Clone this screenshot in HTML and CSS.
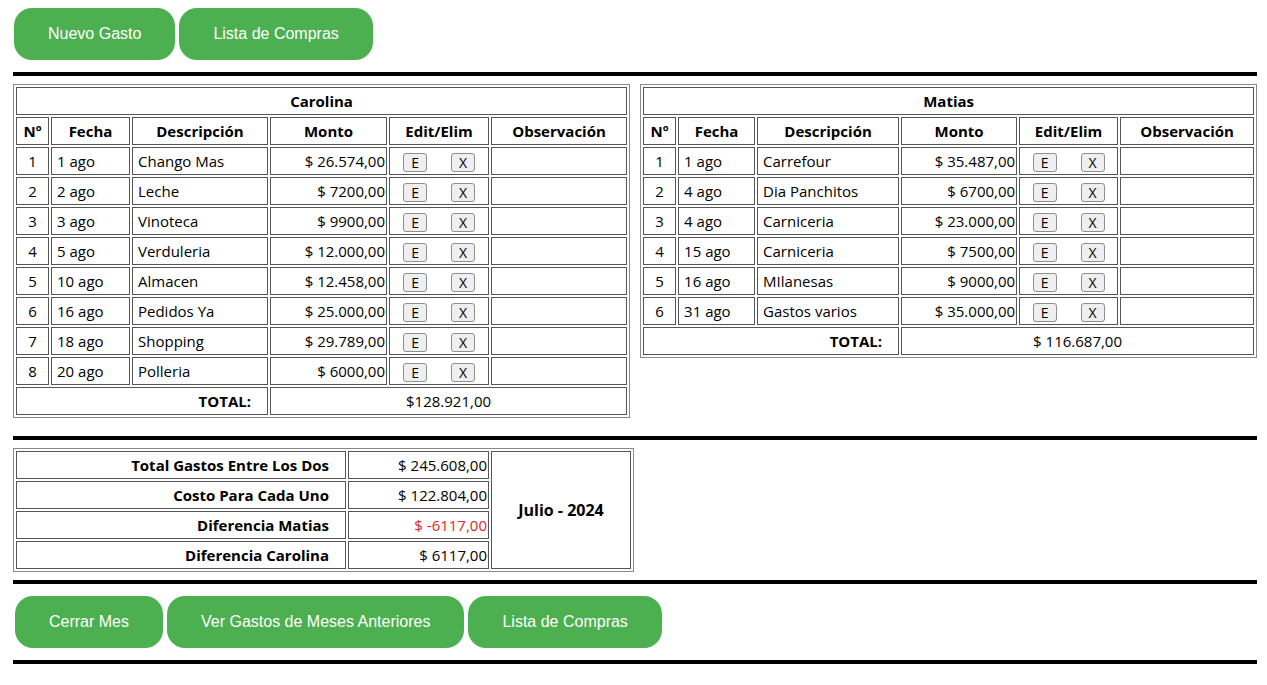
FILE: index.html
```html
<!DOCTYPE html>
<html lang="es">
<head>
<meta charset="utf-8">
<title>Gastos</title>
<link rel="stylesheet" href="styles.css">
</head>
<body>
<div class="page">
  <div class="btn-row top-row">
    <button class="btn">Nuevo Gasto</button>
    <button class="btn">Lista de Compras</button>
  </div>
  <div class="rule rule-1"></div>

  <div class="tables">
    <table class="grid carolina">
      <colgroup>
        <col class="w-n"><col class="cw-fecha"><col class="cw-desc"><col class="cw-monto"><col class="cw-edit"><col class="cw-obs">
      </colgroup>
      <tr><th colspan="6">Carolina</th></tr>
      <tr><th>Nº</th><th>Fecha</th><th>Descripción</th><th>Monto</th><th>Edit/Elim</th><th>Observación</th></tr>
      <tr><td class="c">1</td><td class="l">1 ago</td><td class="l">Chango Mas</td><td class="r">$ 26.574,00</td><td class="acts"><button class="mini">E</button> <button class="mini">X</button></td><td></td></tr>
      <tr><td class="c">2</td><td class="l">2 ago</td><td class="l">Leche</td><td class="r">$ 7200,00</td><td class="acts"><button class="mini">E</button> <button class="mini">X</button></td><td></td></tr>
      <tr><td class="c">3</td><td class="l">3 ago</td><td class="l">Vinoteca</td><td class="r">$ 9900,00</td><td class="acts"><button class="mini">E</button> <button class="mini">X</button></td><td></td></tr>
      <tr><td class="c">4</td><td class="l">5 ago</td><td class="l">Verduleria</td><td class="r">$ 12.000,00</td><td class="acts"><button class="mini">E</button> <button class="mini">X</button></td><td></td></tr>
      <tr><td class="c">5</td><td class="l">10 ago</td><td class="l">Almacen</td><td class="r">$ 12.458,00</td><td class="acts"><button class="mini">E</button> <button class="mini">X</button></td><td></td></tr>
      <tr><td class="c">6</td><td class="l">16 ago</td><td class="l">Pedidos Ya</td><td class="r">$ 25.000,00</td><td class="acts"><button class="mini">E</button> <button class="mini">X</button></td><td></td></tr>
      <tr><td class="c">7</td><td class="l">18 ago</td><td class="l">Shopping</td><td class="r">$ 29.789,00</td><td class="acts"><button class="mini">E</button> <button class="mini">X</button></td><td></td></tr>
      <tr><td class="c">8</td><td class="l">20 ago</td><td class="l">Polleria</td><td class="r">$ 6000,00</td><td class="acts"><button class="mini">E</button> <button class="mini">X</button></td><td></td></tr>
      <tr><th colspan="3" class="total-label">TOTAL:</th><td colspan="3" class="c">$128.921,00</td></tr>
    </table>

    <table class="grid matias">
      <colgroup>
        <col class="w-n"><col class="mw-fecha"><col class="mw-desc"><col class="mw-monto"><col class="mw-edit"><col class="mw-obs">
      </colgroup>
      <tr><th colspan="6">Matias</th></tr>
      <tr><th>Nº</th><th>Fecha</th><th>Descripción</th><th>Monto</th><th>Edit/Elim</th><th>Observación</th></tr>
      <tr><td class="c">1</td><td class="l">1 ago</td><td class="l">Carrefour</td><td class="r">$ 35.487,00</td><td class="acts"><button class="mini">E</button> <button class="mini">X</button></td><td></td></tr>
      <tr><td class="c">2</td><td class="l">4 ago</td><td class="l">Dia Panchitos</td><td class="r">$ 6700,00</td><td class="acts"><button class="mini">E</button> <button class="mini">X</button></td><td></td></tr>
      <tr><td class="c">3</td><td class="l">4 ago</td><td class="l">Carniceria</td><td class="r">$ 23.000,00</td><td class="acts"><button class="mini">E</button> <button class="mini">X</button></td><td></td></tr>
      <tr><td class="c">4</td><td class="l">15 ago</td><td class="l">Carniceria</td><td class="r">$ 7500,00</td><td class="acts"><button class="mini">E</button> <button class="mini">X</button></td><td></td></tr>
      <tr><td class="c">5</td><td class="l">16 ago</td><td class="l">MIlanesas</td><td class="r">$ 9000,00</td><td class="acts"><button class="mini">E</button> <button class="mini">X</button></td><td></td></tr>
      <tr><td class="c">6</td><td class="l">31 ago</td><td class="l">Gastos varios</td><td class="r">$ 35.000,00</td><td class="acts"><button class="mini">E</button> <button class="mini">X</button></td><td></td></tr>
      <tr><th colspan="3" class="total-label">TOTAL:</th><td colspan="3" class="c">$ 116.687,00</td></tr>
    </table>
  </div>

  <div class="rule rule-2"></div>

  <table class="grid summary">
    <colgroup><col class="sw-label"><col class="sw-val"><col class="sw-month"></colgroup>
    <tr><th class="total-label">Total Gastos Entre Los Dos</th><td class="r">$ 245.608,00</td><th rowspan="4" class="month">Julio - 2024</th></tr>
    <tr><th class="total-label">Costo Para Cada Uno</th><td class="r">$ 122.804,00</td></tr>
    <tr><th class="total-label">Diferencia Matias</th><td class="r neg">$ -6117,00</td></tr>
    <tr><th class="total-label">Diferencia Carolina</th><td class="r">$ 6117,00</td></tr>
  </table>

  <div class="rule rule-3"></div>

  <div class="btn-row bottom-row">
    <button class="btn">Cerrar Mes</button>
    <button class="btn">Ver Gastos de Meses Anteriores</button>
    <button class="btn">Lista de Compras</button>
  </div>
  <div class="rule rule-4"></div>
</div>
</body>
</html>
```

FILE: styles.css
```css
* { box-sizing: border-box; }

html, body {
  margin: 0;
  padding: 0;
  background: #ffffff;
}

.page {
  padding: 8px 10px 0 13px;
  font-family: "Open Sans", "Noto Sans", "DejaVu Sans", sans-serif;
  font-size: 15px;
  color: #000;
}

.btn-row {
  display: flex;
  gap: 4px;
  padding-left: 1px;
}

.btn {
  height: 52px;
  padding: 0 34px;
  border: none;
  border-radius: 18px;
  background: #4caf50;
  color: #ffffff;
  font-family: "Liberation Sans", Arial, sans-serif;
  font-size: 16px;
  cursor: pointer;
}

.bottom-row {
  margin-top: 12px;
  padding-left: 2px;
}

.rule {
  height: 4px;
  background: #000;
}

.rule-1 { margin-top: 12px; }
.rule-2 { margin-top: 18px; }
.rule-3 { margin-top: 8px; }
.rule-4 { margin-top: 12px; }

.tables {
  display: flex;
  align-items: flex-start;
  gap: 10px;
  margin-top: 8px;
}

.grid {
  border-collapse: separate;
  border-spacing: 2px;
  border: 1px solid #8a8a8a;
  table-layout: fixed;
  width: 617px;
}

.grid th,
.grid td {
  height: 28px;
  border: 1px solid #555555;
  padding: 0 1px;
  vertical-align: middle;
  white-space: nowrap;
  line-height: 20px;
}

.grid th {
  font-weight: 700;
  text-align: center;
}

.w-n { width: 33px; }
.cw-fecha { width: 79px; }
.cw-desc { width: 136px; }
.cw-monto { width: 117px; }
.cw-edit { width: 100px; }
.cw-obs { width: 136px; }

.mw-fecha { width: 77px; }
.mw-desc { width: 142px; }
.mw-monto { width: 116px; }
.mw-edit { width: 99px; }
.mw-obs { width: 134px; }

.c { text-align: center; }
.l { text-align: left; padding-left: 5px !important; }
.r { text-align: right; }

.grid th.total-label {
  text-align: right;
  padding-right: 16px;
}

.acts {
  text-align: center;
}

.mini {
  width: 24px;
  height: 19px;
  margin: 0 10px;
  padding: 0;
  border: 1px solid #8f8f8f;
  border-radius: 3px;
  background: #efefef;
  color: #000;
  font-family: "Open Sans", "Noto Sans", sans-serif;
  font-size: 14px;
  line-height: 17px;
  vertical-align: middle;
}

.summary {
  width: 621px;
  margin-top: 8px;
}

.sw-label { width: 330px; }
.sw-val { width: 141px; }
.sw-month { width: 140px; }

.neg { color: #e0262c; }

.grid th.month {
  text-align: center;
  font-size: 16px;
}
```
